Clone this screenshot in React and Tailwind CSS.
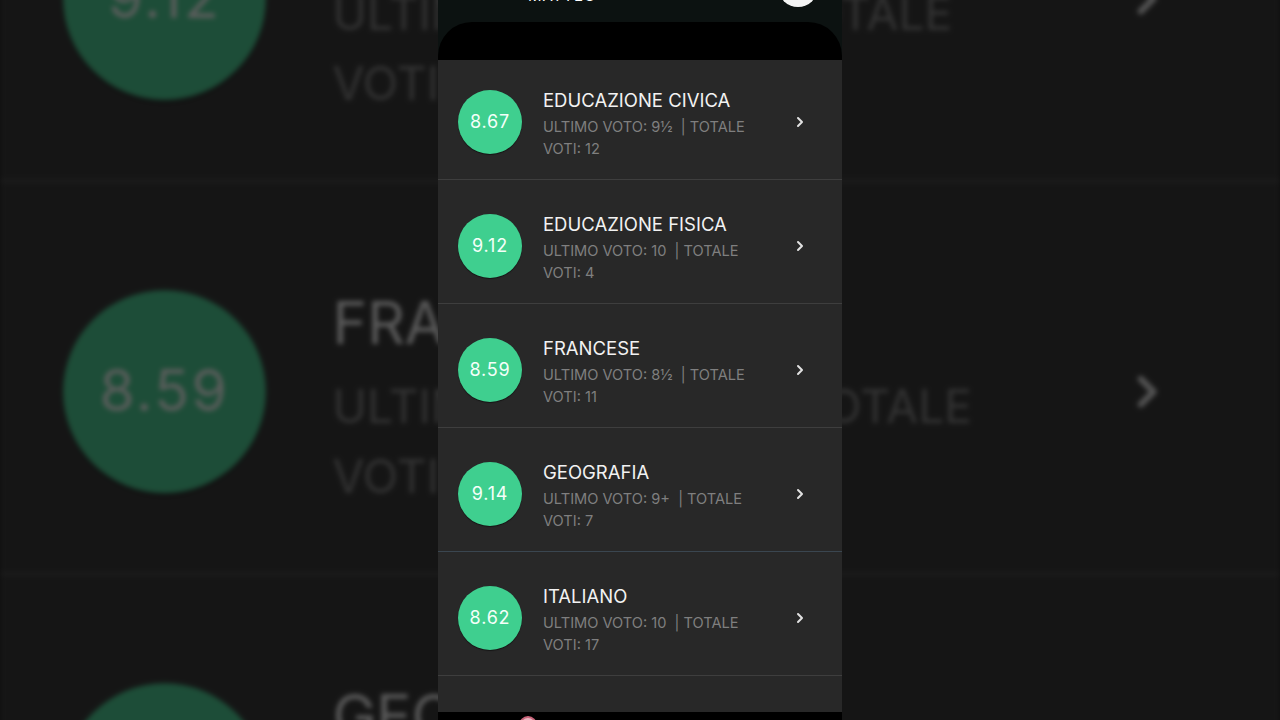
import React from "react";

const rows = [
  { avg: "8.67", name: "EDUCAZIONE CIVICA", last: "9½", total: "12" },
  { avg: "9.12", name: "EDUCAZIONE FISICA", last: "10", total: "4" },
  { avg: "8.59", name: "FRANCESE", last: "8½", total: "11" },
  { avg: "9.14", name: "GEOGRAFIA", last: "9+", total: "7", blue: true },
  { avg: "8.62", name: "ITALIANO", last: "10", total: "17" },
];

const font = { fontFamily: "Inter, 'Noto Sans', sans-serif" };

function Chevron() {
  return (
    <svg width="10" height="14" viewBox="0 0 10 14" className="shrink-0">
      <path d="M3 3 L7 7 L3 11" fill="none" stroke="#e2e2e2" strokeWidth="2" strokeLinecap="round" strokeLinejoin="round" />
    </svg>
  );
}

function Row({ r, first }) {
  return (
    <div
      className={`flex items-center shrink-0 pl-[20px] pr-[37px] border-b ${first ? "h-[120px] pt-[4px]" : "h-[124px] pt-[8px]"} ${r.blue ? "border-[#3a4650]" : "border-[#3e3e3e]"}`}
    >
      <div className="w-[64px] h-[64px] rounded-full bg-[#3fcf8f] shadow-[0_1px_1px_rgba(0,0,0,0.5)] flex items-center justify-center shrink-0">
        <span className="text-[18px] text-[#f4fff9] tracking-[0.8px]" style={font}>{r.avg}</span>
      </div>
      <div className="flex-1 ml-[21px] mt-[4px] flex flex-col" style={font}>
        <span className="text-[18.5px] leading-[24px] text-[#f2f2f2] mb-[4px] whitespace-nowrap">{r.name}</span>
        <span className="text-[14.6px] leading-[22px] text-[#7f7f7f] whitespace-pre">{`ULTIMO VOTO: ${r.last}  | TOTALE`}</span>
        <span className="text-[14.6px] leading-[22px] text-[#7f7f7f]">{`VOTI: ${r.total}`}</span>
      </div>
      <Chevron />
    </div>
  );
}

function Phone() {
  return (
    <div className="w-[404px] h-[720px] flex flex-col bg-[#282828] overflow-hidden">
      <div className="h-[22px] bg-[#0c1211] flex items-start justify-between pl-[90px] pr-[24px] shrink-0">
        <span className="text-[15px] leading-[18px] text-white -mt-[13px] tracking-[1px]" style={font}>MATTEO</span>
        <div className="w-[40px] h-[40px] rounded-full bg-[#f4f4f4] -mt-[33px]" />
      </div>
      <div className="h-[38px] bg-[#0c1211] shrink-0">
        <div className="h-full bg-black rounded-t-[34px]" />
      </div>
      {rows.map((r, i) => (
        <Row key={r.name} r={r} first={i === 0} />
      ))}
      <div className="h-[36px] bg-[#282828] shrink-0" />
      <div className="flex-1 min-h-0 overflow-hidden bg-black flex items-start pl-[81px] pt-[4px]">
        <div className="w-[18px] h-[18px] shrink-0 rounded-full border-2 border-[#c8647a] bg-[#e9b7c0]" />
      </div>
    </div>
  );
}

export default function App() {
  return (
    <div className="w-[1280px] h-[720px] relative overflow-hidden bg-[#0d0d0d]">
      <div className="absolute inset-0 flex justify-center opacity-[0.33] scale-[3.17] blur-[0.8px]">
        <Phone />
      </div>
      <div className="relative flex justify-center">
        <Phone />
      </div>
    </div>
  );
}
